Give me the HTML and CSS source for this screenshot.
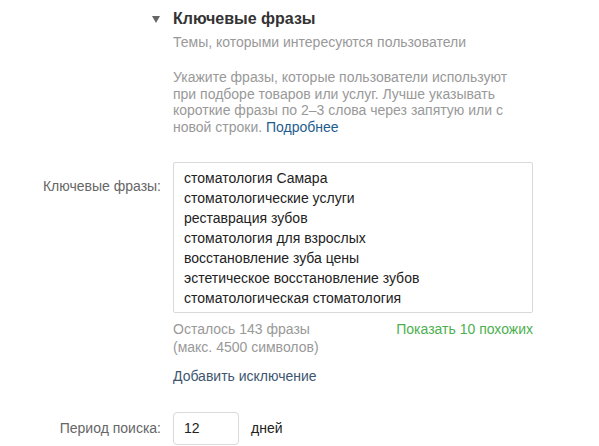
FILE: index.html
```html
<!DOCTYPE html>
<html lang="ru">
<head>
<meta charset="utf-8">
<title>Ключевые фразы</title>
<link rel="stylesheet" href="styles.css">
</head>
<body>
<div class="form">
  <div class="toggle"><span class="caret"></span></div>
  <h2 class="title">Ключевые фразы</h2>

  <div class="spacer"></div>
  <p class="subtitle">Темы, которыми интересуются пользователи</p>

  <div class="spacer"></div>
  <p class="hint">Укажите фразы, которые пользователи используют<br>при подборе товаров или услуг. Лучше указывать<br>короткие фразы по 2–3 слова через запятую или с<br>новой строки. <a class="link" href="#">Подробнее</a></p>

  <label class="label label-phrases" for="phrases">Ключевые фразы:</label>
  <div class="field">
    <textarea id="phrases" class="phrases" rows="7">стоматология Самара
стоматологические услуги
реставрация зубов
стоматология для взрослых
восстановление зуба цены
эстетическое восстановление зубов
стоматологическая стоматология</textarea>
    <div class="meta">
      <div class="counter">Осталось 143 фразы<br>(макс. 4500 символов)</div>
      <a class="similar" href="#">Показать 10 похожих</a>
    </div>
    <a class="exclude" href="#">Добавить исключение</a>
  </div>

  <label class="label label-period" for="period">Период поиска:</label>
  <div class="period">
    <input id="period" class="period-input" type="text" value="12">
    <span class="unit">дней</span>
  </div>
</div>
</body>
</html>
```

FILE: styles.css
```css
html, body {
  margin: 0;
  padding: 0;
  background: #fff;
}

body {
  font-family: "Liberation Sans", Arial, sans-serif;
  color: #333;
}

.form {
  display: grid;
  grid-template-columns: 161px 380px;
  column-gap: 12px;
  padding-top: 9px;
}

.toggle {
  display: flex;
  justify-content: flex-end;
  align-items: center;
  padding-right: 1px;
}

.caret {
  width: 0;
  height: 0;
  border-left: 4px solid transparent;
  border-right: 4px solid transparent;
  border-top: 7px solid #666;
  margin-top: 1px;
}

.title {
  margin: 0;
  font-size: 16px;
  line-height: 20px;
  font-weight: bold;
  color: #333;
}

.subtitle {
  margin: 5px 0 0;
  font-size: 14px;
  line-height: 16px;
  color: #999;
}

.hint {
  margin: 19px 0 0;
  font-size: 14px;
  line-height: 16.67px;
  color: #999;
  white-space: nowrap;
}

.link {
  color: #1f5d8e;
  text-decoration: none;
}

.label {
  justify-self: end;
  font-size: 14px;
  line-height: 20px;
  color: #666;
}

.label-phrases {
  margin-top: 33px;
  padding-top: 7px;
}

.field {
  margin-top: 26px;
  width: 360px;
}

.phrases {
  display: block;
  box-sizing: border-box;
  width: 360px;
  height: 151px;
  margin: 0;
  padding: 5px 10px 4px;
  border: 1px solid #d9d9d9;
  border-radius: 2px;
  font-family: "Liberation Sans", Arial, sans-serif;
  font-size: 14px;
  line-height: 20px;
  color: #222;
  resize: none;
  overflow: hidden;
}

.meta {
  display: flex;
  justify-content: space-between;
  margin-top: 7px;
  font-size: 14px;
  line-height: 18px;
}

.counter {
  color: #999;
}

.similar {
  color: #4caf50;
  text-decoration: none;
}

.exclude {
  display: block;
  margin-top: 11px;
  font-size: 14px;
  line-height: 18px;
  color: #3d5670;
  text-decoration: none;
}

.label-period {
  align-self: center;
  margin-top: 27px;
}

.period {
  display: flex;
  align-items: center;
  gap: 12px;
  margin-top: 27px;
}

.period-input {
  box-sizing: border-box;
  width: 66px;
  height: 33px;
  margin: 0;
  padding: 0 10px;
  border: 1px solid #d9d9d9;
  border-radius: 4px;
  font-family: "Liberation Sans", Arial, sans-serif;
  font-size: 14px;
  color: #222;
}

.unit {
  font-size: 14px;
  color: #222;
}
```
